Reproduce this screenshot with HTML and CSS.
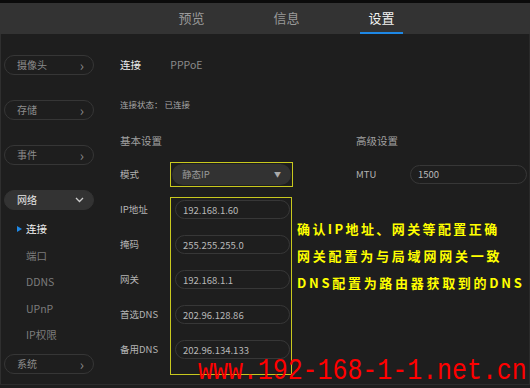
FILE: index.html
```html
<!DOCTYPE html>
<html lang="zh-CN">
<head>
    <meta charset="UTF-8">
    <meta name="viewport" content="width=device-width, initial-scale=1.0">
    <title>设置 - 网络 - 连接</title>
    <link rel="stylesheet" href="styles.css">
</head>
<body>
    <div class="topline"></div>
    <div class="header">
        <div class="tab"><span>预览</span></div>
        <div class="tab"><span>信息</span></div>
        <div class="tab active"><span>设置</span></div>
    </div>

    <div class="main">
        <div class="sidebar">
            <div class="menu-btn">摄像头<span class="chev">&#8250;</span></div>
            <div class="menu-btn">存储<span class="chev">&#8250;</span></div>
            <div class="menu-btn">事件<span class="chev">&#8250;</span></div>
            <div class="menu-btn open">网络
                <svg class="chev-down" width="9" height="6" viewBox="0 0 9 6"><path d="M1 1 L4.5 4.5 L8 1" fill="none" stroke="#ccc" stroke-width="1.3"/></svg>
            </div>
            <ul class="submenu">
                <li class="current">连接</li>
                <li>端口</li>
                <li>DDNS</li>
                <li>UPnP</li>
                <li>IP权限</li>
            </ul>
            <div class="menu-btn">系统<span class="chev">&#8250;</span></div>
        </div>

        <div class="content">
            <div class="conn-head">
                <span class="conn-title">连接</span>
                <span class="conn-type">PPPoE</span>
            </div>
            <div class="status">连接状态： 已连接</div>

            <div class="columns">
                <div class="basic">
                    <h4>基本设置</h4>
                    <div class="row">
                        <label>模式</label>
                        <div class="hl hl-select">
                            <div class="select">静态IP<span class="caret">&#9660;</span></div>
                        </div>
                    </div>
                    <div class="group">
                        <div class="labels">
                            <label>IP地址</label>
                            <label>掩码</label>
                            <label>网关</label>
                            <label>首选DNS</label>
                            <label>备用DNS</label>
                        </div>
                        <div class="hl hl-fields">
                            <input type="text" value="192.168.1.60">
                            <input type="text" value="255.255.255.0">
                            <input type="text" value="192.168.1.1">
                            <input type="text" value="202.96.128.86">
                            <input type="text" value="202.96.134.133">
                        </div>
                    </div>
                </div>

                <div class="advanced">
                    <h4>高级设置</h4>
                    <div class="row">
                        <label class="mtu-label">MTU</label>
                        <input type="text" class="mtu" value="1500">
                    </div>
                </div>
            </div>
        </div>
    </div>

    <!-- 标注 -->
    <div class="note">
        <p class="l1">确认IP地址、网关等配置正确</p>
        <p class="l2">网关配置为与局域网网关一致</p>
        <p class="l3">DNS配置为路由器获取到的DNS</p>
    </div>
    <div class="watermark">www.192-168-1-1.net.cn</div>
</body>
</html>
```

FILE: styles.css
```css
body {
    margin: 0;
    width: 530px;
    height: 388px;
    overflow: hidden;
    position: relative;
    background-color: #1e1e1e;
    font-family: "Noto Sans CJK SC", "Liberation Sans", sans-serif;
    color: #b4b4b4;
}
.topline {
    height: 3px;
    background-color: #0b0b0b;
}
.header {
    height: 31px;
    background-color: #333;
    display: flex;
    padding-left: 144px;
    box-sizing: border-box;
}
.tab {
    width: 95px;
    text-align: center;
}
.tab span {
    display: inline-block;
    height: 29px;
    line-height: 29px;
    padding: 0 8px;
    font-size: 13px;
    color: #9a9a9a;
    border-bottom: 2px solid transparent;
}
.tab.active span {
    color: #f2f2f2;
    border-bottom-color: #1e88e5;
}
.main {
    display: flex;
    height: 351px;
    border-left: 1px solid #2f2f2f;
    border-right: 1px solid #2a2a2a;
    border-bottom: 1px solid #2c2c2c;
    box-sizing: border-box;
}
.sidebar {
    width: 110px;
    padding: 21px 0 0 3px;
    box-sizing: border-box;
}
.menu-btn {
    width: 90px;
    height: 20px;
    box-sizing: border-box;
    border: 1px solid #363636;
    border-radius: 10px;
    font-size: 10px;
    line-height: 18px;
    padding: 0 9px 0 12px;
    color: #8c8c8c;
    display: flex;
    justify-content: space-between;
    align-items: center;
    margin-bottom: 25px;
}
.chev {
    font-size: 14px;
    color: #8c8c8c;
    line-height: 16px;
}
.menu-btn.open {
    background-color: #333;
    border-color: #333;
    color: #e6e6e6;
    margin-bottom: 6px;
}
.submenu {
    list-style: none;
    margin: 0;
    padding: 0 0 0 22px;
}
.submenu li {
    height: 26.5px;
    line-height: 26px;
    font-size: 10.5px;
    color: #7c7c7c;
    position: relative;
}
.submenu li.current {
    color: #f0f0f0;
}
.submenu li.current::before {
    content: "";
    position: absolute;
    left: -9px;
    top: 10px;
    border-left: 5px solid #1e88e5;
    border-top: 3.5px solid transparent;
    border-bottom: 3.5px solid transparent;
}
.submenu + .menu-btn {
    margin-top: 5px;
}
.content {
    flex: 1;
    padding: 23px 0 0 9px;
    font-size: 10px;
}
.conn-head {
    height: 16px;
    line-height: 16px;
}
.conn-title {
    color: #eee;
    font-size: 10.5px;
    display: inline-block;
    width: 48px;
}
.conn-type {
    color: #8a8a8a;
    font-size: 10.5px;
}
.status {
    margin-top: 24px;
    font-size: 8.5px;
    color: #a8a8a8;
    height: 14px;
    line-height: 14px;
}
.columns {
    display: flex;
}
.basic {
    width: 174px;
}
.advanced {
    margin-left: 62px;
}
h4 {
    margin: 22px 0 0 0;
    font-weight: normal;
    font-size: 10.5px;
    color: #a0a0a0;
    height: 16px;
    line-height: 16px;
}
.row {
    display: flex;
    align-items: center;
    margin-top: 12px;
    height: 26px;
}
label {
    font-size: 9.5px;
    color: #b4b4b4;
}
.row label {
    width: 50px;
}
.row .mtu-label {
    width: 54px;
}
.hl {
    border: 1px solid #c8c81e;
    box-sizing: border-box;
}
.hl-select {
    width: 123px;
    height: 25px;
    padding: 1px 1px 0 1px;
}
.select {
    height: 21px;
    border-radius: 11px;
    background-color: #323232;
    font-size: 9.5px;
    color: #9a9a9a;
    line-height: 21px;
    padding: 0 10px;
    display: flex;
    justify-content: space-between;
}
.caret {
    font-size: 7px;
    color: #aaa;
}
.group {
    display: flex;
    margin-top: 10px;
}
.labels {
    width: 50px;
    display: flex;
    flex-direction: column;
    padding-top: 3px;
}
.labels label {
    height: 35px;
    line-height: 19px;
}
.hl-fields {
    width: 122px;
    padding: 2px 1px 1px 4px;
    display: flex;
    flex-direction: column;
    gap: 16px;
}
input {
    height: 19px;
    box-sizing: border-box;
    border: 1px solid #373737;
    border-radius: 10px;
    background: transparent;
    color: #b8b8b8;
    font-family: "Noto Sans CJK SC", "Liberation Sans", sans-serif;
    font-size: 9.5px;
    padding: 0 7px;
    width: 100%;
    outline: none;
}
.mtu {
    width: 117px;
}
.note {
    position: absolute;
    left: 297px;
    top: 218px;
    color: #ffff00;
    font-weight: bold;
    font-size: 13px;
}
.note p {
    margin: 0;
    height: 27px;
    line-height: 22px;
    white-space: nowrap;
}
.note .l1 { letter-spacing: 2.4px; }
.note .l2 { letter-spacing: 2.8px; }
.note .l3 { letter-spacing: 2.7px; }
.watermark {
    position: absolute;
    left: 198px;
    top: 356px;
    color: #ff0000;
    font-family: "Liberation Mono", monospace;
    font-size: 30px;
    line-height: 30px;
    transform: scaleX(0.83);
    transform-origin: left top;
    white-space: nowrap;
}
```
